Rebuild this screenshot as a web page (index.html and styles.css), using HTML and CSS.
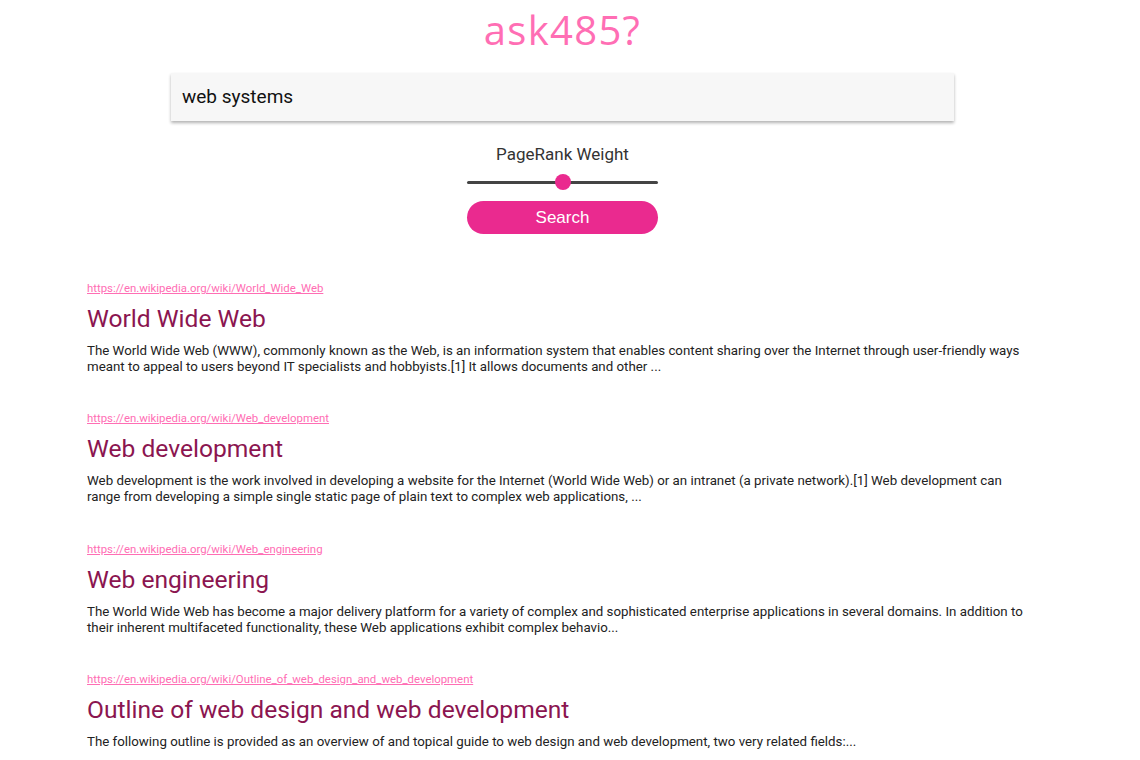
FILE: index.html
```html
<!DOCTYPE html>
<html>
<head>
<meta charset="utf-8">
<link rel="stylesheet" href="styles.css">
</head>
<body>
<div class="page">
<header class="logo">ask485?</header>
<form class="search-form">
  <input class="search-input" type="text" value="web systems">
  <div class="weight">
    <label class="weight-label">PageRank Weight</label>
    <input class="slider" type="range" min="0" max="1" step="0.01" value="0.5">
  </div>
  <button class="search-btn" type="button">Search</button>
</form>
<main class="results">
  <div class="result">
    <a class="url" href="#">https://en.wikipedia.org/wiki/World_Wide_Web</a>
    <h2 class="title">World Wide Web</h2>
    <p class="summary">The World Wide Web (WWW), commonly known as the Web, is an information system that enables content sharing over the Internet through user-friendly ways meant to appeal to users beyond IT specialists and hobbyists.[1] It allows documents and other ...</p>
  </div>
  <div class="result">
    <a class="url" href="#">https://en.wikipedia.org/wiki/Web_development</a>
    <h2 class="title">Web development</h2>
    <p class="summary">Web development is the work involved in developing a website for the Internet (World Wide Web) or an intranet (a private network).[1] Web development can range from developing a simple single static page of plain text to complex web applications, ...</p>
  </div>
  <div class="result">
    <a class="url" href="#">https://en.wikipedia.org/wiki/Web_engineering</a>
    <h2 class="title">Web engineering</h2>
    <p class="summary">The World Wide Web has become a major delivery platform for a variety of complex and sophisticated enterprise applications in several domains. In addition to their inherent multifaceted functionality, these Web applications exhibit complex behavio...</p>
  </div>
  <div class="result">
    <a class="url" href="#">https://en.wikipedia.org/wiki/Outline_of_web_design_and_web_development</a>
    <h2 class="title">Outline of web design and web development</h2>
    <p class="summary">The following outline is provided as an overview of and topical guide to web design and web development, two very related fields:...</p>
  </div>
</main>
</div>
</body>
</html>
```

FILE: styles.css
```css
* { box-sizing: border-box; }
body {
  margin: 0;
  background: #fff;
  font-family: Roboto, "Liberation Sans", sans-serif;
  color: #222;
}
.page {
  width: 1125px;
}
.logo {
  text-align: center;
  font-family: "Open Sans", Lato, sans-serif;
  font-size: 40px;
  line-height: 48px;
  letter-spacing: 1.3px;
  color: #ff6eb4;
  padding-top: 6px;
}
.search-form {
  display: flex;
  flex-direction: column;
  align-items: center;
  margin-top: 19px;
}
.search-input {
  width: 783px;
  height: 48px;
  border: none;
  background: #f7f7f7;
  box-shadow: 0 2px 3px rgba(0,0,0,0.3);
  font-family: Roboto, sans-serif;
  font-size: 19px;
  color: #111;
  padding: 0 11px 2px;
  outline: none;
}
.weight {
  display: flex;
  flex-direction: column;
  align-items: center;
  margin-top: 23px;
}
.weight-label {
  font-size: 17px;
  line-height: 20px;
  color: #333;
}
.slider {
  -webkit-appearance: none;
  appearance: none;
  width: 191px;
  height: 16px;
  margin: 10px 0 0;
  background: transparent;
}
.slider::-webkit-slider-runnable-track {
  height: 3px;
  background: #444;
  border-radius: 2px;
}
.slider::-webkit-slider-thumb {
  -webkit-appearance: none;
  width: 16px;
  height: 16px;
  border-radius: 50%;
  background: #ea2a8f;
  margin-top: -6.5px;
  border: none;
}
.search-btn {
  width: 191px;
  height: 33px;
  margin-top: 11px;
  border: none;
  border-radius: 17px;
  background: #ea2a8f;
  color: #fff;
  font-family: "Liberation Sans", Arial, sans-serif;
  font-size: 17px;
}
.results {
  padding: 47px 0 0 87px;
  width: 1032px;
}
.result {
  margin-bottom: 36.4px;
}
.url {
  display: block;
  font-size: 11.4px;
  line-height: 14px;
  color: #ff6eb4;
  text-decoration: underline;
}
.title {
  margin: 8px 0 0;
  font-weight: 400;
  font-size: 24.6px;
  line-height: 32px;
  color: #8b1550;
}
.summary {
  margin: 8px 0 0;
  font-size: 13.3px;
  line-height: 16px;
  color: #222;
}
```
